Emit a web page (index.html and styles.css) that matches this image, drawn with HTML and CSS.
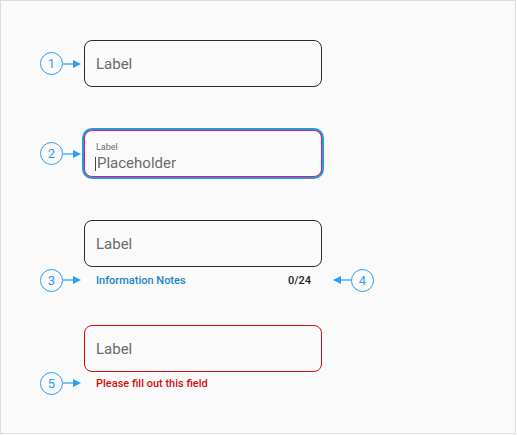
FILE: index.html
```html
<!DOCTYPE html>
<html>
<head>
<meta charset="utf-8">
<link rel="stylesheet" href="styles.css">
</head>
<body>
<div class="frame">
  <div class="row">
    <div class="marker">
      <span class="num">1</span>
      <svg class="arrow" width="18" height="10" viewBox="0 0 18 10"><line x1="0" y1="5" x2="11" y2="5" stroke="#2a9df4" stroke-width="1.2"/><polygon points="10,1 18,5 10,9" fill="#2a9df4"/></svg>
    </div>
    <div class="field"><span class="ph">Label</span></div>
  </div>

  <div class="row gap">
    <div class="marker">
      <span class="num">2</span>
      <svg class="arrow" width="18" height="10" viewBox="0 0 18 10"><line x1="0" y1="5" x2="11" y2="5" stroke="#2a9df4" stroke-width="1.2"/><polygon points="10,1 18,5 10,9" fill="#2a9df4"/></svg>
    </div>
    <div class="field focus">
      <span class="small">Label</span>
      <span class="value"><span class="caret"></span>Placeholder</span>
    </div>
  </div>

  <div class="row gap">
    <div class="marker empty"></div>
    <div class="field"><span class="ph">Label</span></div>
  </div>
  <div class="row note-row">
    <div class="marker">
      <span class="num">3</span>
      <svg class="arrow" width="18" height="10" viewBox="0 0 18 10"><line x1="0" y1="5" x2="11" y2="5" stroke="#2a9df4" stroke-width="1.2"/><polygon points="10,1 18,5 10,9" fill="#2a9df4"/></svg>
    </div>
    <div class="notes">
      <span class="info">Information Notes</span>
      <span class="count">0/24</span>
    </div>
    <div class="marker right">
      <svg class="arrow" width="18" height="10" viewBox="0 0 18 10"><polygon points="8,1 0,5 8,9" fill="#2a9df4"/><line x1="7" y1="5" x2="18" y2="5" stroke="#2a9df4" stroke-width="1.2"/></svg>
      <span class="num">4</span>
    </div>
  </div>

  <div class="row gap-err">
    <div class="marker empty"></div>
    <div class="field error"><span class="ph">Label</span></div>
  </div>
  <div class="row err-row">
    <div class="marker">
      <span class="num">5</span>
      <svg class="arrow" width="18" height="10" viewBox="0 0 18 10"><line x1="0" y1="5" x2="11" y2="5" stroke="#2a9df4" stroke-width="1.2"/><polygon points="10,1 18,5 10,9" fill="#2a9df4"/></svg>
    </div>
    <div class="errmsg">Please fill out this field</div>
  </div>
</div>
</body>
</html>
```

FILE: styles.css
```css
html, body {
  margin: 0;
  padding: 0;
  background: #ffffff;
}
.frame {
  box-sizing: border-box;
  width: 516px;
  height: 434px;
  border: 1px solid #dcdcdc;
  background: #fafafa;
  padding-top: 39px;
  display: flex;
  flex-direction: column;
  font-family: Roboto, "Noto Sans", sans-serif;
}
.row {
  display: flex;
  align-items: center;
}
.gap { margin-top: 43px; }
.gap-err { margin-top: 34px; }
.note-row { margin-top: 2px; height: 22px; }
.err-row { height: 22px; }
.marker {
  width: 83px;
  box-sizing: border-box;
  padding-left: 39px;
  display: flex;
  align-items: center;
  flex: none;
}
.marker.empty { height: 1px; }
.marker.right {
  width: auto;
  padding-left: 11px;
}
.num {
  box-sizing: border-box;
  width: 23px;
  height: 23px;
  border: 1.2px solid #2a9df4;
  border-radius: 50%;
  color: #2a9df4;
  font-size: 13px;
  font-weight: 400;
  display: flex;
  align-items: center;
  justify-content: center;
  flex: none;
}
.arrow { display: block; flex: none; }
.field {
  box-sizing: border-box;
  width: 238px;
  height: 47px;
  border: 1px solid #2b2b2b;
  border-radius: 8px;
  padding: 0 11px;
  display: flex;
  flex-direction: column;
  justify-content: center;
  background: #fafafa;
  flex: none;
}
.ph {
  font-size: 15px;
  color: #6b6b6b;
}
.field.focus {
  border: 1px solid #e0197d;
  box-shadow: 0 0 0 2px #1f9bd7;
  padding-left: 10px;
  justify-content: flex-start;
  padding-top: 11px;
}
.small {
  font-size: 9px;
  color: #6b6b6b;
  line-height: 11px;
  padding-left: 1px;
}
.value {
  font-size: 15px;
  color: #6b6b6b;
  line-height: 17px;
  margin-top: 2px;
  display: flex;
  align-items: center;
}
.caret {
  display: inline-block;
  width: 1px;
  height: 14px;
  background: #444;
  margin-right: 1px;
}
.field.error { border-color: #d40d0d; }
.notes {
  width: 238px;
  box-sizing: border-box;
  padding: 0 11px 0 12px;
  display: flex;
  justify-content: space-between;
  align-items: center;
  font-size: 11px;
  font-weight: 500;
  flex: none;
}
.info { color: #1a84c4; }
.count { color: #222; }
.errmsg {
  padding-left: 12px;
  font-size: 11px;
  font-weight: 500;
  color: #d40d0d;
}
```
